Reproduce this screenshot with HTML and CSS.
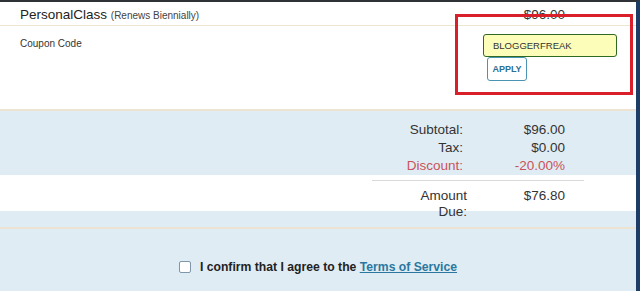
FILE: index.html
```html
<!DOCTYPE html>
<html>
<head>
<meta charset="utf-8">
<link rel="stylesheet" href="styles.css">
</head>
<body>
<div class="page">
  <div class="item">
    <div class="item-name">PersonalClass <span class="cycle">(Renews Biennially)</span></div>
    <div class="item-price">$96.00</div>
  </div>
  <div class="coupon">
    <div class="coupon-label">Coupon Code</div>
    <div class="coupon-form">
      <input class="coupon-input" type="text" value="BLOGGERFREAK">
      <button class="apply">APPLY</button>
    </div>
  </div>
  <section class="totals">
    <div class="sums">
      <div class="lbl">Subtotal:</div><div class="val">$96.00</div>
      <div class="lbl">Tax:</div><div class="val">$0.00</div>
      <div class="lbl disc">Discount:</div><div class="val disc">-20.00%</div>
    </div>
    <div class="due-band">
      <div class="rule"></div>
      <div class="due-row">
        <div class="due-label">Amount Due:</div>
        <div class="due-value">$76.80</div>
      </div>
    </div>
  </section>
  <div class="confirm">
    <label class="confirm-row"><input type="checkbox" class="check"><span>I confirm that I agree to the <a href="#" class="tos">Terms of Service</a></span></label>
  </div>
  <div class="highlight"></div>
</div>
</body>
</html>
```
FILE: styles.css
```css
html, body {
  margin: 0;
  padding: 0;
  background: #ffffff;
}
body {
  font-family: "Liberation Sans", Arial, sans-serif;
  color: #333;
}
.page {
  position: relative;
  width: 640px;
  height: 291px;
  box-sizing: border-box;
  border-top: 2px solid #2f3338;
  border-right: 4px solid #1d3c66;
  overflow: hidden;
  background: #fff;
}
.item {
  height: 24px;
  box-sizing: border-box;
  padding: 4px 71px 0 20px;
  line-height: 18px;
  border-bottom: 1px solid #eee5cf;
  display: flex;
  justify-content: space-between;
}
.item-name {
  font-size: 13.5px;
  color: #222;
}
.cycle {
  font-size: 10px;
  color: #444;
}
.item-price {
  font-size: 13.5px;
  color: #333;
}
.coupon {
  height: 85px;
  box-sizing: border-box;
  border-bottom: 2px solid #ece4d0;
  display: flex;
  justify-content: space-between;
  align-items: flex-start;
  padding: 0 19px 0 20px;
}
.coupon-label {
  margin-top: 12px;
  font-size: 10px;
  line-height: 12px;
  color: #333;
}
.coupon-form {
  margin-top: 8px;
  width: 134px;
  display: flex;
  flex-direction: column;
  align-items: flex-start;
}
.coupon-input {
  width: 134px;
  height: 23px;
  box-sizing: border-box;
  margin: 0;
  padding: 0 0 0 9px;
  border: 1px solid #2e6a23;
  border-radius: 3px;
  background: #fbfdb8;
  font-family: "Liberation Sans", Arial, sans-serif;
  font-size: 9.5px;
  color: #333;
  outline: none;
}
.apply {
  margin: 0 0 0 4px;
  width: 40px;
  height: 24px;
  box-sizing: border-box;
  padding: 0;
  border: 1px solid #4b93b3;
  border-radius: 3px;
  background: #fff;
  font-family: "Liberation Sans", Arial, sans-serif;
  font-weight: bold;
  font-size: 9px;
  color: #2b6f94;
}
.totals {
  background: #e0ecf3;
  padding: 10px 0 16px 0;
  border-bottom: 2px solid #ece4d0;
}
.sums {
  display: grid;
  grid-template-columns: 90px 102px;
  width: 192px;
  margin: 0 71px 0 auto;
  font-size: 13.5px;
  line-height: 18px;
  text-align: right;
}
.lbl, .val {
  color: #333;
}
.disc {
  color: #c9535b;
}
.due-band {
  background: #fff;
  height: 36px;
  box-sizing: border-box;
  padding-top: 5px;
}
.rule {
  width: 212px;
  height: 1px;
  margin: 0 52px 0 auto;
  background: #d9d9d9;
}
.due-row {
  display: flex;
  justify-content: flex-end;
  margin: 7px 71px 0 0;
  font-size: 13.5px;
  line-height: 16px;
}
.due-label {
  width: 60px;
  text-align: right;
}
.due-value {
  width: 98px;
  text-align: right;
}
.confirm {
  background: #e0ecf3;
  height: 62px;
  box-sizing: border-box;
  padding-top: 31px;
  display: flex;
  justify-content: center;
}
.confirm-row {
  display: flex;
  align-items: center;
  height: 14px;
  font-size: 12.2px;
  font-weight: bold;
  color: #222;
}
.check {
  appearance: none;
  -webkit-appearance: none;
  width: 12px;
  height: 12px;
  margin: 0 9px 0 0;
  box-sizing: border-box;
  border: 1px solid #7f97aa;
  border-radius: 2px;
  background: #fff;
}
.tos {
  color: #2a789f;
  text-decoration: underline;
}
.highlight {
  position: absolute;
  left: 455px;
  top: 12px;
  width: 178px;
  height: 81px;
  box-sizing: border-box;
  border: 3px solid #d9202a;
}
```
